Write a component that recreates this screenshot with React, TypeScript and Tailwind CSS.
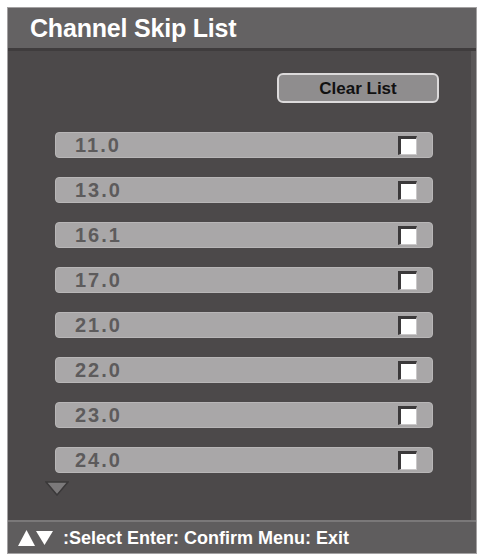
import React from "react";

const channels = ["11.0", "13.0", "16.1", "17.0", "21.0", "22.0", "23.0", "24.0"];

export default function App() {
  return (
    <div
      className="w-[481px] h-[557px] bg-white pt-[7px] pl-[7px] pr-[4px] pb-[3px]"
      style={{ fontFamily: '"Liberation Sans", Arial, sans-serif' }}
    >
      <div className="h-full flex flex-col border border-[#a3a1a2] bg-[#4c494a]">
        <div className="h-[43px] shrink-0 bg-[#646263] border-b-[3px] border-[#3f3c3d] flex items-center pl-[22px]">
          <span className="text-white font-bold text-[25px] leading-none tracking-[-0.2px]">Channel Skip List</span>
        </div>
        <div className="flex-1 flex flex-col border-r-[5px] border-[#5a5758]">
          <div className="flex justify-end pt-[22px] pr-[32px]">
            <div className="w-[162px] h-[30px] rounded-[6px] border-2 border-[#dcdadb] bg-[#8f8d8e] flex items-center justify-center">
              <span className="text-[#111] font-bold text-[17px] leading-none">Clear List</span>
            </div>
          </div>
          <div className="flex flex-col gap-[19px] pl-[47px] pt-[29px]">
            {channels.map((c) => (
              <div
                key={c}
                className="w-[378px] h-[26px] rounded-[4px] bg-[#a9a7a8] border border-[#b8b6b7] flex items-center justify-between pl-[19px] pr-[15px]"
              >
                <span className="text-[#5d5b5c] font-bold text-[20px] leading-none tracking-[2px]">{c}</span>
                <div className="w-[19px] h-[19px] bg-white border-t-[3px] border-l-[3px] border-r border-b border-t-[#3b393a] border-l-[#3b393a] border-r-[#c9c7c8] border-b-[#c9c7c8]" />
              </div>
            ))}
          </div>
          <div className="pl-[37px] pt-[8px]">
            <svg width="24" height="15" viewBox="0 0 24 15">
              <polygon points="1,1 23,1 12,14" fill="#7b797a" stroke="#3a3839" strokeWidth="1.5" />
            </svg>
          </div>
        </div>
        <div className="h-[33px] shrink-0 bg-[#5f5d5e] border-t-2 border-[#7a7879] flex items-center pl-[10px]">
          <svg width="36" height="18" viewBox="0 0 36 18" className="shrink-0">
            <polygon points="0,17 17,17 8.5,1" fill="#ffffff" />
            <polygon points="18,2 35,2 26.5,16" fill="#ffffff" />
          </svg>
          <span className="ml-[9px] text-white font-bold text-[18px] leading-none">:Select Enter: Confirm Menu: Exit</span>
        </div>
      </div>
    </div>
  );
}
